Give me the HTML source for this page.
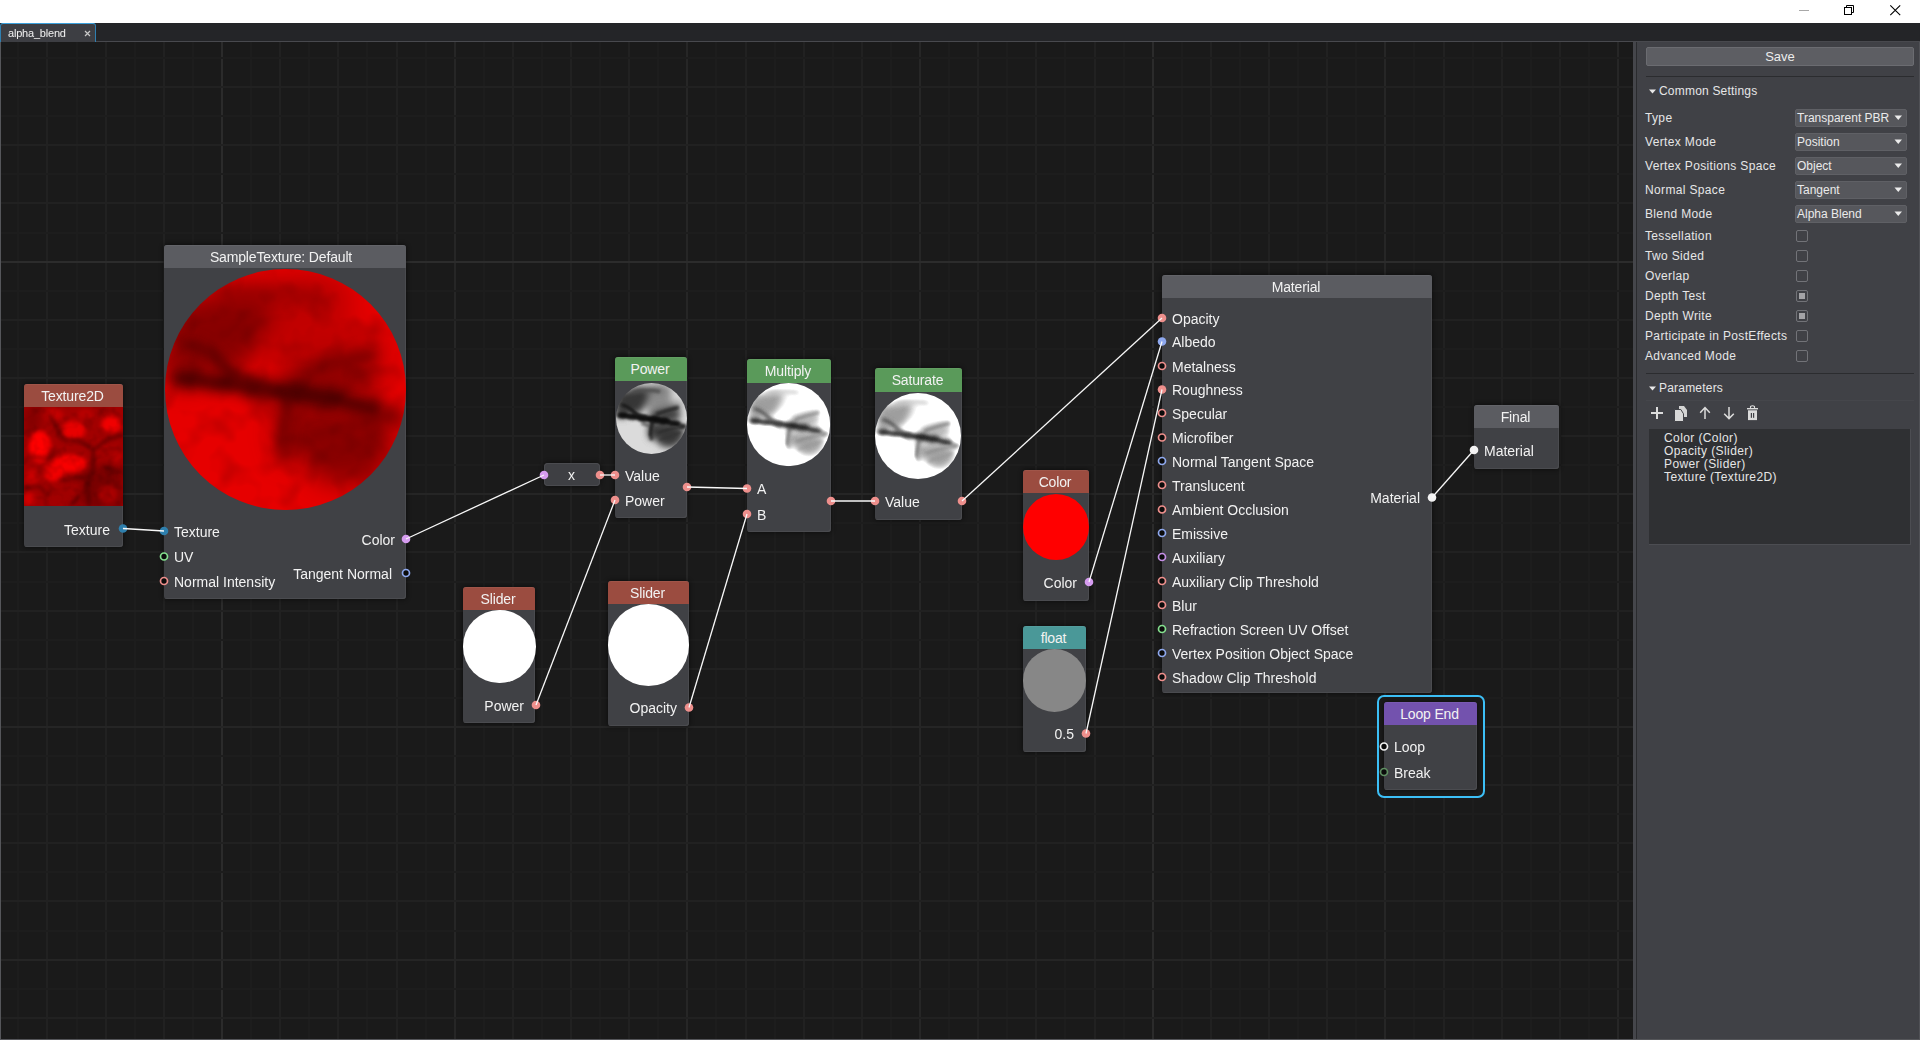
<!DOCTYPE html><html><head><meta charset="utf-8"><style>
html,body{margin:0;padding:0}
body{width:1920px;height:1040px;overflow:hidden;position:relative;background:#ffffff;font-family:"Liberation Sans", sans-serif}
.a{position:absolute}
.nd{position:absolute;background:#404145;border-radius:3px;overflow:hidden;box-shadow:0 0 4px 1px rgba(0,0,0,0.4), inset -1px -1px 0 #4a4b4f}
.hd{color:#f2f2f2;font-size:14px;text-align:center;white-space:nowrap;letter-spacing:-0.15px;box-sizing:border-box}
.lb{position:absolute;white-space:nowrap;line-height:18px}
.pl{position:absolute;left:1645px;font-size:12px;color:#e6e6e6;white-space:nowrap;letter-spacing:0.35px;line-height:14px}
.dd{position:absolute;left:1795px;width:110px;height:16px;background:#56575c;border:1px solid #5f6065;border-radius:2px;font-size:12px;color:#eaeaea;line-height:16px;text-indent:1px;white-space:nowrap}

.cb{position:absolute;left:1796px;width:10px;height:10px;border:1px solid #727378;border-radius:2px;background:#404146}
.cb.on:after{content:"";position:absolute;left:2px;top:2px;width:6px;height:6px;background:#a3a3a6}

</style></head><body>
<svg width="0" height="0" style="position:absolute;left:0;top:0"><defs><filter id="bl5" x="-30%" y="-30%" width="160%" height="160%"><feGaussianBlur stdDeviation="5"/></filter>
<filter id="bl3" x="-30%" y="-30%" width="160%" height="160%"><feGaussianBlur stdDeviation="2.6"/></filter>
<filter id="bl2" x="-30%" y="-30%" width="160%" height="160%"><feGaussianBlur stdDeviation="1.8"/></filter>
<filter id="nz" x="0" y="0" width="100%" height="100%" color-interpolation-filters="sRGB"><feTurbulence type="fractalNoise" baseFrequency="0.1" numOctaves="2" seed="11"/><feColorMatrix type="matrix" values="0.36 0 0 0 0.8  0.36 0 0 0 0.8  0.36 0 0 0 0.8  0 0 0 0 1"/></filter>
<g id="vmap">
<rect width="100" height="100" fill="#ffffff"/>
<g filter="url(#bl5)">
 <path d="M20 6 L66 3 L80 10 L50 16 L30 16 Z" fill="#bcbcbc"/>
 <path d="M36 18 L70 10 L90 20 L94 34 L60 38 L44 38 Z" fill="#d2d2d2"/>
 <ellipse cx="84" cy="21" rx="8" ry="6" fill="#ffffff"/>
 <path d="M2 14 L36 8 L46 16 L40 32 L32 42 L2 44 Z" fill="#8a8a8a"/>
 <ellipse cx="8" cy="38" rx="9" ry="11" fill="#8c8c8c"/>
 <path d="M46 42 L60 38 L84 34 L90 40 L88 52 L70 55 L50 53 Z" fill="#969696"/>
 <path d="M54 58 L72 57 L95 62 L93 80 L80 90 L64 88 L56 78 Z" fill="#8c8c8c"/>
 <ellipse cx="51" cy="68" rx="5" ry="12" fill="#8a8a8a"/>
</g>
<g filter="url(#bl3)">
 <ellipse cx="10" cy="45.5" rx="8" ry="4" fill="#505050"/>
 <ellipse cx="24" cy="47.5" rx="10" ry="3.8" fill="#5a5a5a"/>
 <ellipse cx="40" cy="50" rx="10" ry="4.2" fill="#4c4c4c"/>
 <ellipse cx="54" cy="51.5" rx="9" ry="5" fill="#444444"/>
 <ellipse cx="67" cy="53.5" rx="9" ry="4.5" fill="#4a4a4a"/>
 <ellipse cx="82" cy="57" rx="9" ry="4" fill="#606060"/>
 <ellipse cx="94" cy="61" rx="5" ry="3" fill="#707070"/>
 <path d="M6 30 C 16 32, 22 38, 26 42 S 36 47, 44 48" stroke-width="4" stroke="#707070" fill="none"/>
 <path d="M24 14 C 34 11, 48 9, 62 12" stroke-width="4" stroke="#a0a0a0" fill="none"/>
 <path d="M52 55 C 50 62, 49 70, 50 80" stroke-width="4" stroke="#7c7c7c" fill="none"/>
 <path d="M56 44 C 66 40, 76 37, 88 34" stroke-width="4" stroke="#868686" fill="none"/>
 <path d="M36 57 C 40 58, 44 60, 48 60" stroke-width="3" stroke="#a0a0a0" fill="none"/>
</g>
<g filter="url(#bl2)" fill="none" stroke-linecap="round">
 <path d="M6 45 C 20 46.5, 36 49, 52 51 S 74 54, 88 59" stroke-width="1.8" stroke="#3a3a3a"/>
 <path d="M10 31 C 18 33, 23 38, 27 42 S 36 46, 42 47" stroke-width="1.6" stroke="#505050"/>
 <path d="M51 54 C 50 60, 49 66, 48 74" stroke-width="1.6" stroke="#606060"/>
 <path d="M58 44 C 66 41, 76 38, 86 36" stroke-width="1.4" stroke="#6a6a6a"/>
 <path d="M60 70 C 70 66, 82 64, 93 62" stroke-width="2" stroke="#7a7a7a"/>
 <path d="M62 80 C 72 76, 82 74, 90 70" stroke-width="1.6" stroke="#848484"/>
</g>
</g>
<clipPath id="sc"><circle cx="50" cy="50" r="50"/></clipPath><filter id="fred" color-interpolation-filters="sRGB"><feColorMatrix type="matrix" values="0.8 0 0 0 0.1  0 0 0 0 0  0 0 0 0 0  0 0 0 1 0"/></filter><filter id="fgray" color-interpolation-filters="sRGB"><feComponentTransfer><feFuncR type="gamma" amplitude="0.84" exponent="2.4" offset="0.02"/><feFuncG type="gamma" amplitude="0.84" exponent="2.4" offset="0.02"/><feFuncB type="gamma" amplitude="0.84" exponent="2.4" offset="0.02"/></feComponentTransfer></filter><filter id="fwhite" color-interpolation-filters="sRGB"><feComponentTransfer><feFuncR type="linear" slope="1.7" intercept="-0.3"/><feFuncG type="linear" slope="1.7" intercept="-0.3"/><feFuncB type="linear" slope="1.7" intercept="-0.3"/></feComponentTransfer></filter></defs></svg>
<div class="a" style="left:0;top:0;width:1920px;height:23px;background:#ffffff"></div>
<svg class="a" style="left:1790px;top:0" width="130" height="23"><rect x="9" y="10" width="10" height="1" fill="#a8a8a8"/><rect x="54.5" y="7.5" width="7" height="7" fill="none" stroke="#000" stroke-width="1"/><path d="M56.5 7.5 V5.5 H63.5 V12.5 H61.5" fill="none" stroke="#000" stroke-width="1"/><path d="M100.3 5.3 L110.2 15.2 M110.2 5.3 L100.3 15.2" stroke="#000" stroke-width="1.1"/></svg>
<div class="a" style="left:0;top:23px;width:1920px;height:19px;background:#242528"></div>
<div class="a" style="left:0;top:23px;width:96px;height:19px;background:#3d3e43;border-top:1px solid #3aa0dc;border-left:1px solid #2f7fb0;border-right:1px solid #2f7fb0;border-radius:3px 3px 0 0;box-sizing:border-box"></div>
<div class="a" style="left:8px;top:26px;font-size:11px;color:#f2f2f2;line-height:14px;letter-spacing:-0.2px">alpha_blend</div>
<svg class="a" style="left:84px;top:30px" width="8" height="8"><path d="M1 1 L6 6 M6 1 L1 6" stroke="#c8c8c8" stroke-width="1.2"/></svg>
<div class="a" style="left:96px;top:41px;width:1824px;height:1px;background:#48494e"></div>
<div class="a" style="left:0;top:42px;width:1633px;height:997px;background:#1a1a1a;overflow:hidden">
<svg width="1633" height="997" style="position:absolute;left:0;top:0"><rect x="17" y="0" width="2" height="997" fill="#1d1d1d"/><rect x="46" y="0" width="2" height="997" fill="#212121"/><rect x="76" y="0" width="2" height="997" fill="#1d1d1d"/><rect x="105" y="0" width="2" height="997" fill="#212121"/><rect x="134" y="0" width="2" height="997" fill="#1d1d1d"/><rect x="163" y="0" width="2" height="997" fill="#212121"/><rect x="192" y="0" width="2" height="997" fill="#1d1d1d"/><rect x="221" y="0" width="2" height="997" fill="#2b2b2b"/><rect x="250" y="0" width="2" height="997" fill="#1d1d1d"/><rect x="279" y="0" width="2" height="997" fill="#212121"/><rect x="308" y="0" width="2" height="997" fill="#1d1d1d"/><rect x="337" y="0" width="2" height="997" fill="#212121"/><rect x="366" y="0" width="2" height="997" fill="#1d1d1d"/><rect x="396" y="0" width="2" height="997" fill="#212121"/><rect x="425" y="0" width="2" height="997" fill="#1d1d1d"/><rect x="454" y="0" width="2" height="997" fill="#262626"/><rect x="483" y="0" width="2" height="997" fill="#1d1d1d"/><rect x="512" y="0" width="2" height="997" fill="#212121"/><rect x="541" y="0" width="2" height="997" fill="#1d1d1d"/><rect x="570" y="0" width="2" height="997" fill="#212121"/><rect x="599" y="0" width="2" height="997" fill="#1d1d1d"/><rect x="628" y="0" width="2" height="997" fill="#212121"/><rect x="657" y="0" width="2" height="997" fill="#1d1d1d"/><rect x="686" y="0" width="2" height="997" fill="#262626"/><rect x="715" y="0" width="2" height="997" fill="#1d1d1d"/><rect x="745" y="0" width="2" height="997" fill="#212121"/><rect x="774" y="0" width="2" height="997" fill="#1d1d1d"/><rect x="803" y="0" width="2" height="997" fill="#212121"/><rect x="832" y="0" width="2" height="997" fill="#1d1d1d"/><rect x="861" y="0" width="2" height="997" fill="#212121"/><rect x="890" y="0" width="2" height="997" fill="#1d1d1d"/><rect x="919" y="0" width="2" height="997" fill="#262626"/><rect x="948" y="0" width="2" height="997" fill="#1d1d1d"/><rect x="977" y="0" width="2" height="997" fill="#212121"/><rect x="1006" y="0" width="2" height="997" fill="#1d1d1d"/><rect x="1035" y="0" width="2" height="997" fill="#212121"/><rect x="1064" y="0" width="2" height="997" fill="#1d1d1d"/><rect x="1094" y="0" width="2" height="997" fill="#212121"/><rect x="1123" y="0" width="2" height="997" fill="#1d1d1d"/><rect x="1152" y="0" width="2" height="997" fill="#2b2b2b"/><rect x="1181" y="0" width="2" height="997" fill="#1d1d1d"/><rect x="1210" y="0" width="2" height="997" fill="#212121"/><rect x="1239" y="0" width="2" height="997" fill="#1d1d1d"/><rect x="1268" y="0" width="2" height="997" fill="#212121"/><rect x="1297" y="0" width="2" height="997" fill="#1d1d1d"/><rect x="1326" y="0" width="2" height="997" fill="#212121"/><rect x="1355" y="0" width="2" height="997" fill="#1d1d1d"/><rect x="1384" y="0" width="2" height="997" fill="#262626"/><rect x="1413" y="0" width="2" height="997" fill="#1d1d1d"/><rect x="1443" y="0" width="2" height="997" fill="#212121"/><rect x="1472" y="0" width="2" height="997" fill="#1d1d1d"/><rect x="1501" y="0" width="2" height="997" fill="#212121"/><rect x="1530" y="0" width="2" height="997" fill="#1d1d1d"/><rect x="1559" y="0" width="2" height="997" fill="#212121"/><rect x="1588" y="0" width="2" height="997" fill="#1d1d1d"/><rect x="1617" y="0" width="2" height="997" fill="#262626"/><rect x="0" y="15" width="1633" height="2" fill="#1d1d1d"/><rect x="0" y="44" width="1633" height="2" fill="#212121"/><rect x="0" y="73" width="1633" height="2" fill="#1d1d1d"/><rect x="0" y="102" width="1633" height="2" fill="#212121"/><rect x="0" y="131" width="1633" height="2" fill="#1d1d1d"/><rect x="0" y="160" width="1633" height="2" fill="#212121"/><rect x="0" y="190" width="1633" height="2" fill="#1d1d1d"/><rect x="0" y="219" width="1633" height="2" fill="#2c2c2c"/><rect x="0" y="248" width="1633" height="2" fill="#1d1d1d"/><rect x="0" y="277" width="1633" height="2" fill="#212121"/><rect x="0" y="306" width="1633" height="2" fill="#1d1d1d"/><rect x="0" y="335" width="1633" height="2" fill="#212121"/><rect x="0" y="364" width="1633" height="2" fill="#1d1d1d"/><rect x="0" y="393" width="1633" height="2" fill="#212121"/><rect x="0" y="422" width="1633" height="2" fill="#1d1d1d"/><rect x="0" y="451" width="1633" height="2" fill="#252525"/><rect x="0" y="480" width="1633" height="2" fill="#1d1d1d"/><rect x="0" y="509" width="1633" height="2" fill="#212121"/><rect x="0" y="539" width="1633" height="2" fill="#1d1d1d"/><rect x="0" y="568" width="1633" height="2" fill="#212121"/><rect x="0" y="597" width="1633" height="2" fill="#1d1d1d"/><rect x="0" y="626" width="1633" height="2" fill="#212121"/><rect x="0" y="655" width="1633" height="2" fill="#1d1d1d"/><rect x="0" y="684" width="1633" height="2" fill="#252525"/><rect x="0" y="713" width="1633" height="2" fill="#1d1d1d"/><rect x="0" y="742" width="1633" height="2" fill="#212121"/><rect x="0" y="771" width="1633" height="2" fill="#1d1d1d"/><rect x="0" y="800" width="1633" height="2" fill="#212121"/><rect x="0" y="829" width="1633" height="2" fill="#1d1d1d"/><rect x="0" y="858" width="1633" height="2" fill="#212121"/><rect x="0" y="888" width="1633" height="2" fill="#1d1d1d"/><rect x="0" y="917" width="1633" height="2" fill="#252525"/><rect x="0" y="946" width="1633" height="2" fill="#1d1d1d"/><rect x="0" y="975" width="1633" height="2" fill="#212121"/></svg>
</div>
<div class="a" style="left:0;top:42px;width:1px;height:998px;background:#55565a"></div>
<div class="nd" style="left:24px;top:384px;width:99px;height:163px"><div class="hd" style="height:23px;background:#9b4c40;line-height:23px;padding-top:1px;box-shadow:inset 0 1px 0 rgba(255,255,255,0.05)"><span style="position:relative;left:-1px">Texture2D</span></div></div>
<svg class="a" style="left:24px;top:407px" width="99" height="99" viewBox="0 0 100 100" preserveAspectRatio="none">
<defs><filter id="tb6" x="-20%" y="-20%" width="140%" height="140%"><feGaussianBlur stdDeviation="5"/></filter>
<filter id="tb2" x="-20%" y="-20%" width="140%" height="140%"><feGaussianBlur stdDeviation="2"/></filter></defs>
<rect width="100" height="100" fill="#a20000"/>
<g filter="url(#tb6)">
<path d="M60 62 L100 56 L100 100 L55 100 Z" fill="#7a0000"/>
<path d="M0 0 L18 0 L15 25 L0 28 Z" fill="#840000"/>
</g>
<g filter="url(#tb2)">
<ellipse cx="16" cy="40" rx="11" ry="16" fill="#ff0000"/>
<ellipse cx="46" cy="57" rx="17" ry="9" fill="#f80000"/>
<ellipse cx="50" cy="24" rx="12" ry="10" fill="#e80000"/>
<ellipse cx="88" cy="18" rx="10" ry="9" fill="#f00000"/>
<ellipse cx="30" cy="66" rx="10" ry="9" fill="#f00000"/>
<ellipse cx="8" cy="71" rx="6" ry="8" fill="#c80000"/>
<ellipse cx="30" cy="8" rx="10" ry="6" fill="#c40000"/>
<ellipse cx="74" cy="40" rx="8" ry="7" fill="#b00000"/>
<ellipse cx="5" cy="93" rx="6" ry="7" fill="#d00000"/>
<ellipse cx="85" cy="88" rx="10" ry="9" fill="#a80000"/>
<ellipse cx="95" cy="52" rx="5" ry="7" fill="#b80000"/>
<ellipse cx="62" cy="8" rx="8" ry="6" fill="#b80000"/>
<ellipse cx="40" cy="88" rx="10" ry="8" fill="#a00000"/>
</g>
<g filter="url(#tb2)" fill="none" stroke="#4a0000" stroke-linecap="round">
<path d="M27 10 L34 22 L40 33 L56 34 L70 43 L84 33 L100 28" stroke-width="2.5"/>
<path d="M70 43 L70 62 L64 78 L66 100" stroke-width="2.5"/>
<path d="M6 50 L24 52 L32 46" stroke-width="2"/>
<path d="M36 74 L52 72 L64 70" stroke-width="2"/>
<path d="M0 82 L16 80 L24 90" stroke-width="1.8"/>
<path d="M76 8 L80 2 M80 60 L96 66 M56 90 L46 100" stroke-width="1.8"/>
</g>
<rect width="100" height="100" filter="url(#nz)" style="mix-blend-mode:multiply"/>
</svg>

<div class="lb" style="right:1810px;top:520.5px;font-size:14px;color:#f2f2f2;text-align:right">Texture</div>
<div class="nd" style="left:164px;top:245px;width:242px;height:354px"><div class="hd" style="height:23px;background:#5b5c61;line-height:23px;padding-top:1px;box-shadow:inset 0 1px 0 rgba(255,255,255,0.05)"><span style="position:relative;left:-4px">SampleTexture: Default</span></div></div>
<svg style="position:absolute;left:165.0px;top:268.5px" width="241.0" height="241.0" viewBox="0 0 100 100"><g clip-path="url(#sc)"><g filter="url(#fred)"><use href="#vmap"/><rect width="100" height="100" filter="url(#nz)" style="mix-blend-mode:multiply"/></g></g></svg>

<div class="lb" style="left:174px;top:522.5px;font-size:14px;color:#f2f2f2">Texture</div>

<div class="lb" style="left:174px;top:548px;font-size:14px;color:#f2f2f2">UV</div>

<div class="lb" style="left:174px;top:572.5px;font-size:14px;color:#f2f2f2">Normal Intensity</div>

<div class="lb" style="right:1525px;top:530.5px;font-size:14px;color:#f2f2f2;text-align:right">Color</div>

<div class="lb" style="right:1528px;top:564.5px;font-size:14px;color:#f2f2f2;text-align:right">Tangent Normal</div>
<div class="a" style="left:544px;top:463px;width:56px;height:23px;background:#3e3f43;border-radius:4px;box-shadow:0 0 4px 1px rgba(0,0,0,0.4), inset 0 0 0 1px #4a4b4f"></div>
<div class="lb" style="left:568px;top:466px;font-size:14px;color:#f2f2f2">x</div>


<div class="nd" style="left:615px;top:357px;width:72px;height:161px"><div class="hd" style="height:24px;background:#5a9a5a;line-height:24px;padding-top:0px;box-shadow:inset 0 1px 0 rgba(255,255,255,0.05)"><span style="position:relative;left:-1px">Power</span></div></div>
<svg style="position:absolute;left:615.5px;top:382.5px" width="71.0" height="71.0" viewBox="0 0 100 100"><g clip-path="url(#sc)"><g filter="url(#fgray)"><use href="#vmap"/></g></g></svg>

<div class="lb" style="left:625px;top:466.5px;font-size:14px;color:#f2f2f2">Value</div>

<div class="lb" style="left:625px;top:491.5px;font-size:14px;color:#f2f2f2">Power</div>

<div class="nd" style="left:747px;top:359px;width:84px;height:173px"><div class="hd" style="height:24px;background:#5a9a5a;line-height:24px;padding-top:0px;box-shadow:inset 0 1px 0 rgba(255,255,255,0.05)"><span style="position:relative;left:-1px">Multiply</span></div></div>
<svg style="position:absolute;left:747.4px;top:383.4px" width="83.2" height="83.2" viewBox="0 0 100 100"><g clip-path="url(#sc)"><g filter="url(#fwhite)"><use href="#vmap"/></g></g></svg>

<div class="lb" style="left:757px;top:480px;font-size:14px;color:#f2f2f2">A</div>

<div class="lb" style="left:757px;top:505.5px;font-size:14px;color:#f2f2f2">B</div>

<div class="nd" style="left:875px;top:368px;width:87px;height:152px"><div class="hd" style="height:24px;background:#5a9a5a;line-height:24px;padding-top:0px;box-shadow:inset 0 1px 0 rgba(255,255,255,0.05)"><span style="position:relative;left:-1px">Saturate</span></div></div>
<svg style="position:absolute;left:875.4px;top:392.6px" width="86" height="86" viewBox="0 0 100 100"><g clip-path="url(#sc)"><g filter="url(#fwhite)"><use href="#vmap"/></g></g></svg>

<div class="lb" style="left:885px;top:492.5px;font-size:14px;color:#f2f2f2">Value</div>

<div class="nd" style="left:463px;top:587px;width:72px;height:136px"><div class="hd" style="height:23px;background:#9b4c40;line-height:23px;padding-top:1px;box-shadow:inset 0 1px 0 rgba(255,255,255,0.05)"><span style="position:relative;left:-1px">Slider</span></div></div>
<div style="position:absolute;left:463.3px;top:610.3px;width:72.4px;height:72.4px;border-radius:50%;background:#ffffff"></div>

<div class="lb" style="right:1396px;top:696.5px;font-size:14px;color:#f2f2f2;text-align:right">Power</div>
<div class="nd" style="left:608px;top:581px;width:81px;height:145px"><div class="hd" style="height:23px;background:#9b4c40;line-height:23px;padding-top:1px;box-shadow:inset 0 1px 0 rgba(255,255,255,0.05)"><span style="position:relative;left:-1px">Slider</span></div></div>
<div style="position:absolute;left:607.5999999999999px;top:604.3px;width:81.4px;height:81.4px;border-radius:50%;background:#ffffff"></div>

<div class="lb" style="right:1243px;top:699px;font-size:14px;color:#f2f2f2;text-align:right">Opacity</div>
<div class="nd" style="left:1023px;top:470px;width:66px;height:131px"><div class="hd" style="height:23px;background:#9b4c40;line-height:23px;padding-top:1px;box-shadow:inset 0 1px 0 rgba(255,255,255,0.05)"><span style="position:relative;left:-1px">Color</span></div></div>
<div style="position:absolute;left:1023px;top:494px;width:66px;height:66px;border-radius:50%;background:#ff0000"></div>

<div class="lb" style="right:843px;top:573.5px;font-size:14px;color:#f2f2f2;text-align:right">Color</div>
<div class="nd" style="left:1023px;top:626px;width:63px;height:126px"><div class="hd" style="height:23px;background:#4a9898;line-height:23px;padding-top:1px;box-shadow:inset 0 1px 0 rgba(255,255,255,0.05)"><span style="position:relative;left:-1px">float</span></div></div>
<div style="position:absolute;left:1023.2px;top:649.2px;width:62.6px;height:62.6px;border-radius:50%;background:#878787"></div>

<div class="lb" style="right:846px;top:725px;font-size:14px;color:#f2f2f2;text-align:right">0.5</div>
<div class="nd" style="left:1162px;top:275px;width:270px;height:418px"><div class="hd" style="height:23px;background:#5b5c61;line-height:23px;padding-top:1px;box-shadow:inset 0 1px 0 rgba(255,255,255,0.05)"><span style="position:relative;left:-1px">Material</span></div></div>

<div class="lb" style="left:1172px;top:309.5px;font-size:14px;color:#f2f2f2">Opacity</div>

<div class="lb" style="left:1172px;top:333.0px;font-size:14px;color:#f2f2f2">Albedo</div>

<div class="lb" style="left:1172px;top:357.5px;font-size:14px;color:#f2f2f2">Metalness</div>

<div class="lb" style="left:1172px;top:381.0px;font-size:14px;color:#f2f2f2">Roughness</div>

<div class="lb" style="left:1172px;top:404.5px;font-size:14px;color:#f2f2f2">Specular</div>

<div class="lb" style="left:1172px;top:429.0px;font-size:14px;color:#f2f2f2">Microfiber</div>

<div class="lb" style="left:1172px;top:452.5px;font-size:14px;color:#f2f2f2">Normal Tangent Space</div>

<div class="lb" style="left:1172px;top:476.5px;font-size:14px;color:#f2f2f2">Translucent</div>

<div class="lb" style="left:1172px;top:501.0px;font-size:14px;color:#f2f2f2">Ambient Occlusion</div>

<div class="lb" style="left:1172px;top:524.5px;font-size:14px;color:#f2f2f2">Emissive</div>

<div class="lb" style="left:1172px;top:548.5px;font-size:14px;color:#f2f2f2">Auxiliary</div>

<div class="lb" style="left:1172px;top:572.5px;font-size:14px;color:#f2f2f2">Auxiliary Clip Threshold</div>

<div class="lb" style="left:1172px;top:596.5px;font-size:14px;color:#f2f2f2">Blur</div>

<div class="lb" style="left:1172px;top:620.5px;font-size:14px;color:#f2f2f2">Refraction Screen UV Offset</div>

<div class="lb" style="left:1172px;top:644.5px;font-size:14px;color:#f2f2f2">Vertex Position Object Space</div>

<div class="lb" style="left:1172px;top:668.5px;font-size:14px;color:#f2f2f2">Shadow Clip Threshold</div>

<div class="lb" style="right:500px;top:489px;font-size:14px;color:#f2f2f2;text-align:right">Material</div>
<div class="nd" style="left:1474px;top:405px;width:85px;height:64px"><div class="hd" style="height:23px;background:#5b5c61;line-height:23px;padding-top:1px;box-shadow:inset 0 1px 0 rgba(255,255,255,0.05)"><span style="position:relative;left:-1px">Final</span></div></div>

<div class="lb" style="left:1484px;top:441.5px;font-size:14px;color:#f2f2f2">Material</div>
<div class="a" style="left:1377px;top:695px;width:104px;height:99px;border:2px solid #3cbff6;border-radius:7px;background:#1b1b1b"></div>
<div class="nd" style="left:1384px;top:702px;width:93px;height:88px"><div class="hd" style="height:23px;background:#7352ae;line-height:23px;padding-top:1px;box-shadow:inset 0 1px 0 rgba(255,255,255,0.05)"><span style="position:relative;left:-1px">Loop End</span></div></div>

<div class="lb" style="left:1394px;top:738px;font-size:14px;color:#f2f2f2">Loop</div>

<div class="lb" style="left:1394px;top:763.5px;font-size:14px;color:#f2f2f2">Break</div>
<svg class="a" style="left:0;top:0;z-index:5" width="1633" height="1040"><circle cx="123" cy="528.5" r="4.3" fill="#2e7fad"/><circle cx="164" cy="531" r="4.3" fill="#2e7fad"/><circle cx="164" cy="556.5" r="3.5" fill="#0b0b0b" stroke="#84e08e" stroke-width="1.7"/><circle cx="164" cy="581" r="3.5" fill="#0b0b0b" stroke="#ee8f8c" stroke-width="1.7"/><circle cx="406" cy="539" r="4.3" fill="#d69cf0"/><circle cx="406" cy="573" r="3.5" fill="#0b0b0b" stroke="#8ea8ee" stroke-width="1.7"/><circle cx="544" cy="475" r="4.3" fill="#d69cf0"/><circle cx="600" cy="475" r="4.3" fill="#ee8f8c"/><circle cx="615" cy="475" r="4.3" fill="#ee8f8c"/><circle cx="615" cy="500" r="4.3" fill="#ee8f8c"/><circle cx="687" cy="487" r="4.3" fill="#ee8f8c"/><circle cx="747" cy="488.5" r="4.3" fill="#ee8f8c"/><circle cx="747" cy="514" r="4.3" fill="#ee8f8c"/><circle cx="831" cy="501" r="4.3" fill="#ee8f8c"/><circle cx="875" cy="501" r="4.3" fill="#ee8f8c"/><circle cx="962" cy="501" r="4.3" fill="#ee8f8c"/><circle cx="536" cy="705" r="4.3" fill="#ee8f8c"/><circle cx="689" cy="707.5" r="4.3" fill="#ee8f8c"/><circle cx="1089" cy="582" r="4.3" fill="#d69cf0"/><circle cx="1086" cy="733.5" r="4.3" fill="#ee8f8c"/><circle cx="1162" cy="318" r="4.3" fill="#ee8f8c"/><circle cx="1162" cy="341.5" r="4.3" fill="#8ea8ee"/><circle cx="1162" cy="366" r="3.5" fill="#0b0b0b" stroke="#ee8f8c" stroke-width="1.7"/><circle cx="1162" cy="389.5" r="4.3" fill="#ee8f8c"/><circle cx="1162" cy="413" r="3.5" fill="#0b0b0b" stroke="#ee8f8c" stroke-width="1.7"/><circle cx="1162" cy="437.5" r="3.5" fill="#0b0b0b" stroke="#ee8f8c" stroke-width="1.7"/><circle cx="1162" cy="461" r="3.5" fill="#0b0b0b" stroke="#8ea8ee" stroke-width="1.7"/><circle cx="1162" cy="485" r="3.5" fill="#0b0b0b" stroke="#ee8f8c" stroke-width="1.7"/><circle cx="1162" cy="509.5" r="3.5" fill="#0b0b0b" stroke="#ee8f8c" stroke-width="1.7"/><circle cx="1162" cy="533" r="3.5" fill="#0b0b0b" stroke="#8ea8ee" stroke-width="1.7"/><circle cx="1162" cy="557" r="3.5" fill="#0b0b0b" stroke="#c58fe6" stroke-width="1.7"/><circle cx="1162" cy="581" r="3.5" fill="#0b0b0b" stroke="#ee8f8c" stroke-width="1.7"/><circle cx="1162" cy="605" r="3.5" fill="#0b0b0b" stroke="#ee8f8c" stroke-width="1.7"/><circle cx="1162" cy="629" r="3.5" fill="#0b0b0b" stroke="#84e08e" stroke-width="1.7"/><circle cx="1162" cy="653" r="3.5" fill="#0b0b0b" stroke="#8ea8ee" stroke-width="1.7"/><circle cx="1162" cy="677" r="3.5" fill="#0b0b0b" stroke="#ee8f8c" stroke-width="1.7"/><circle cx="1432" cy="497.5" r="4.3" fill="#f2f2f2"/><circle cx="1474" cy="450" r="4.3" fill="#f2f2f2"/><circle cx="1384" cy="746.5" r="3.5" fill="#0b0b0b" stroke="#f2f2f2" stroke-width="1.7"/><circle cx="1384" cy="772" r="3.5" fill="#0b0b0b" stroke="#5f8f62" stroke-width="1.7"/></svg>
<svg class="a" style="left:0;top:0;z-index:6" width="1633" height="1040">
<line x1="123" y1="528.5" x2="164" y2="531" stroke="#f8f8f8" stroke-width="1.3"/>
<line x1="406" y1="539" x2="544" y2="475" stroke="#f8f8f8" stroke-width="1.3"/>
<line x1="600" y1="475" x2="615" y2="475" stroke="#f8f8f8" stroke-width="1.3"/>
<line x1="536" y1="705" x2="615" y2="500" stroke="#f8f8f8" stroke-width="1.3"/>
<line x1="687" y1="487" x2="747" y2="488.5" stroke="#f8f8f8" stroke-width="1.3"/>
<line x1="689" y1="707.5" x2="747" y2="514" stroke="#f8f8f8" stroke-width="1.3"/>
<line x1="831" y1="501" x2="875" y2="501" stroke="#f8f8f8" stroke-width="1.3"/>
<line x1="962" y1="501" x2="1162" y2="318" stroke="#f8f8f8" stroke-width="1.3"/>
<line x1="1089" y1="582" x2="1162" y2="341.5" stroke="#f8f8f8" stroke-width="1.3"/>
<line x1="1086" y1="733.5" x2="1162" y2="389.5" stroke="#f8f8f8" stroke-width="1.3"/>
<line x1="1432" y1="497.5" x2="1474" y2="450" stroke="#f8f8f8" stroke-width="1.3"/>
</svg>
<div class="a" style="left:1633px;top:42px;width:3px;height:998px;background:#45464b"></div>
<div class="a" style="left:1636px;top:42px;width:1px;height:998px;background:#2a2b2e"></div>
<div class="a" style="left:1637px;top:42px;width:283px;height:998px;background:#404146"></div>
<div class="a" style="left:1919px;top:42px;width:1px;height:998px;background:#505156"></div>
<div class="a" style="left:1646px;top:47px;width:266px;height:17px;background:#5d5e63;border:1px solid #6b6c71;border-radius:2px;text-align:center;font-size:13px;line-height:17px;color:#ececec">Save</div>
<div class="a" style="left:1646px;top:76px;width:268px;height:1px;background:#2b2c2f"></div>
<svg class="a" style="left:1649px;top:88.5px" width="8" height="6"><path d="M0 0.5 H7 L3.5 4.5 Z" fill="#e8e8e8"/></svg>
<div class="pl" style="left:1659px;top:84px;letter-spacing:0.2px">Common Settings</div>
<div class="pl" style="top:111px">Type</div>
<div class="dd" style="top:109px">Transparent PBR</div>
<svg class="a" style="left:1894px;top:115px" width="10" height="6"><path d="M0.5 0.5 H8 L4.25 5 Z" fill="#ececec"/></svg>
<div class="pl" style="top:135px">Vertex Mode</div>
<div class="dd" style="top:133px">Position</div>
<svg class="a" style="left:1894px;top:139px" width="10" height="6"><path d="M0.5 0.5 H8 L4.25 5 Z" fill="#ececec"/></svg>
<div class="pl" style="top:159px">Vertex Positions Space</div>
<div class="dd" style="top:157px">Object</div>
<svg class="a" style="left:1894px;top:163px" width="10" height="6"><path d="M0.5 0.5 H8 L4.25 5 Z" fill="#ececec"/></svg>
<div class="pl" style="top:183px">Normal Space</div>
<div class="dd" style="top:181px">Tangent</div>
<svg class="a" style="left:1894px;top:187px" width="10" height="6"><path d="M0.5 0.5 H8 L4.25 5 Z" fill="#ececec"/></svg>
<div class="pl" style="top:207px">Blend Mode</div>
<div class="dd" style="top:205px">Alpha Blend</div>
<svg class="a" style="left:1894px;top:211px" width="10" height="6"><path d="M0.5 0.5 H8 L4.25 5 Z" fill="#ececec"/></svg>
<div class="pl" style="top:229px">Tessellation</div>
<div class="cb" style="top:230px"></div>
<div class="pl" style="top:249px">Two Sided</div>
<div class="cb" style="top:250px"></div>
<div class="pl" style="top:269px">Overlap</div>
<div class="cb" style="top:270px"></div>
<div class="pl" style="top:289px">Depth Test</div>
<div class="cb on" style="top:290px"></div>
<div class="pl" style="top:309px">Depth Write</div>
<div class="cb on" style="top:310px"></div>
<div class="pl" style="top:329px">Participate in PostEffects</div>
<div class="cb" style="top:330px"></div>
<div class="pl" style="top:349px">Advanced Mode</div>
<div class="cb" style="top:350px"></div>
<div class="a" style="left:1646px;top:373px;width:268px;height:1px;background:#2b2c2f"></div>
<svg class="a" style="left:1649px;top:385.5px" width="8" height="6"><path d="M0 0.5 H7 L3.5 4.5 Z" fill="#e8e8e8"/></svg>
<div class="pl" style="left:1659px;top:381px;letter-spacing:0.2px">Parameters</div>
<div class="a" style="left:1646px;top:400px;width:268px;height:1px;background:#45464b"></div>
<svg class="a" style="left:1648px;top:403px" width="120" height="20">
<path d="M3 10 H15 M9 4 V16" stroke="#dcdcdc" stroke-width="2"/>
<path d="M31 3 H36 L39 7 V14 H31 Z" fill="#d4d4d4"/><path d="M26.5 6.5 H32.8 L35.5 10.8 V18.5 H26.5 Z" fill="#d8d8d8" stroke="#404146" stroke-width="1"/>
<path d="M57 16 V4.6 M52.2 9.8 L57 4.6 L61.8 9.8" stroke="#dcdcdc" stroke-width="1.5" fill="none"/>
<path d="M81 4 V15.5 M76.2 10.8 L81 15.6 L85.8 10.8" stroke="#dcdcdc" stroke-width="1.5" fill="none"/>
<path d="M102.5 5.5 V3.5 Q104.5 2 106.5 3.5 V5.5" stroke="#dcdcdc" stroke-width="1.1" fill="none"/>
<rect x="99" y="5" width="11" height="1.4" fill="#dcdcdc"/>
<rect x="100" y="7.3" width="9" height="9.8" fill="#dcdcdc"/><rect x="102.8" y="10" width="1.2" height="4.8" fill="#404146"/><rect x="105" y="10" width="1.2" height="4.8" fill="#404146"/>
</svg>
<div class="a" style="left:1649px;top:429px;width:261px;height:115px;background:#2f3033;border-right:1px solid #4c4d52;border-bottom:1px solid #4c4d52"></div>
<div class="pl" style="left:1664px;top:432px;line-height:13px;letter-spacing:0.4px">Color (Color)</div>
<div class="pl" style="left:1664px;top:445px;line-height:13px;letter-spacing:0.4px">Opacity (Slider)</div>
<div class="pl" style="left:1664px;top:458px;line-height:13px;letter-spacing:0.4px">Power (Slider)</div>
<div class="pl" style="left:1664px;top:471px;line-height:13px;letter-spacing:0.4px">Texture (Texture2D)</div>
<div class="a" style="left:0;top:1039px;width:1920px;height:1px;background:#55565a;z-index:10"></div>
</body></html>
